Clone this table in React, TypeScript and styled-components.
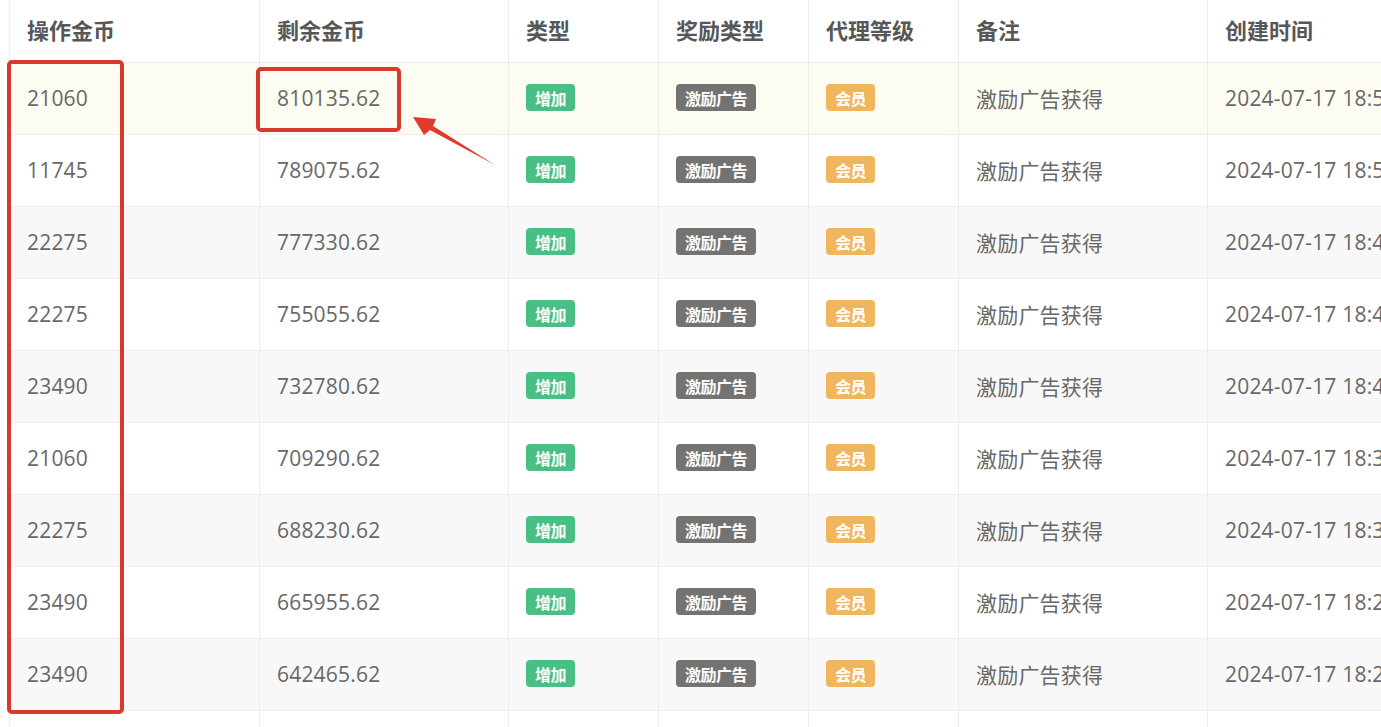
import React from "react";
import styled, { createGlobalStyle } from "styled-components";

const Global = createGlobalStyle`
  html, body { margin: 0; padding: 0; background: #fff; overflow: hidden; }
  body { font-family: "Open Sans", "Noto Sans CJK SC", sans-serif; }
`;

const Page = styled.div`
  position: relative;
  width: 1381px;
  height: 727px;
  overflow: hidden;
  padding-left: 9px;
  box-sizing: border-box;
`;

const Grid = styled.div`
  display: grid;
  grid-template-columns: 250px 249px 150px 150px 150px 249px 260px;
  width: max-content;
  border-left: 1px solid #eeeeee;
`;

const Row = styled.div<{ $bg: string; $h: number }>`
  display: contents;
  & > div {
    background: ${(p) => p.$bg};
    height: ${(p) => p.$h}px;
  }
`;

const Cell = styled.div<{ $head?: boolean }>`
  box-sizing: border-box;
  display: flex;
  align-items: center;
  padding-left: 17px;
  border-right: 1px solid #ededed;
  border-bottom: 1px solid #ededed;
  white-space: nowrap;
  overflow: hidden;
  font-family: ${(p) => (p.$head ? '"Noto Sans CJK SC", sans-serif' : '"Open Sans", "Noto Sans CJK SC", sans-serif')};
  font-size: ${(p) => (p.$head ? "22px" : "21px")};
  letter-spacing: ${(p) => (p.$head ? "0" : "0.2px")};
  font-weight: ${(p) => (p.$head ? 700 : 400)};
  color: ${(p) => (p.$head ? "#575757" : "#686868")};
  padding-bottom: ${(p) => (p.$head ? "4px" : "2px")};
`;

const Tag = styled.span<{ $bg: string }>`
  display: inline-flex;
  align-items: center;
  height: 27px;
  padding: 0 9px;
  border-radius: 4px;
  background: ${(p) => p.$bg};
  color: #fff;
  font-family: "Noto Sans CJK SC", sans-serif;
  font-size: 16px;
  font-weight: 700;
  letter-spacing: -0.5px;
`;

const Overlay = styled.svg`
  position: absolute;
  left: 0;
  top: 0;
  pointer-events: none;
`;

const heads = ["操作金币", "剩余金币", "类型", "奖励类型", "代理等级", "备注", "创建时间"];

const rows = [
  ["21060", "810135.62", "2024-07-17 18:55:12"],
  ["11745", "789075.62", "2024-07-17 18:51:40"],
  ["22275", "777330.62", "2024-07-17 18:47:03"],
  ["22275", "755055.62", "2024-07-17 18:43:26"],
  ["23490", "732780.62", "2024-07-17 18:40:11"],
  ["21060", "709290.62", "2024-07-17 18:36:48"],
  ["22275", "688230.62", "2024-07-17 18:32:15"],
  ["23490", "665955.62", "2024-07-17 18:28:59"],
  ["23490", "642465.62", "2024-07-17 18:25:34"],
  ["21060", "618975.62", "2024-07-17 18:21:02"],
];

export default function App() {
  return (
    <Page>
      <Global />
      <Grid>
        <Row $bg="#ffffff" $h={63}>
          {heads.map((h) => (
            <Cell key={h} $head>
              {h}
            </Cell>
          ))}
        </Row>
        {rows.map((r, i) => {
          const bg = i === 0 ? "#fdfcf3" : i % 2 === 0 ? "#f8f8f8" : "#ffffff";
          return (
            <Row key={i} $bg={bg} $h={72}>
              <Cell>{r[0]}</Cell>
              <Cell>{r[1]}</Cell>
              <Cell>
                <Tag $bg="#48bf84">增加</Tag>
              </Cell>
              <Cell>
                <Tag $bg="#747372">激励广告</Tag>
              </Cell>
              <Cell>
                <Tag $bg="#efb65e">会员</Tag>
              </Cell>
              <Cell>激励广告获得</Cell>
              <Cell>{r[2]}</Cell>
            </Row>
          );
        })}
      </Grid>
      <Overlay width="1381" height="727" viewBox="0 0 1381 727">
        <rect x="9" y="62" width="113" height="650" rx="3" fill="none" stroke="#d8392c" strokeWidth="4" />
        <rect x="258" y="69" width="141" height="61" rx="3" fill="none" stroke="#d8392c" strokeWidth="4" />
        <polygon
          points="413,117 436,119 433,126 495,165 430,130 424,135"
          fill="#e03a2c"
        />
      </Overlay>
    </Page>
  );
}
